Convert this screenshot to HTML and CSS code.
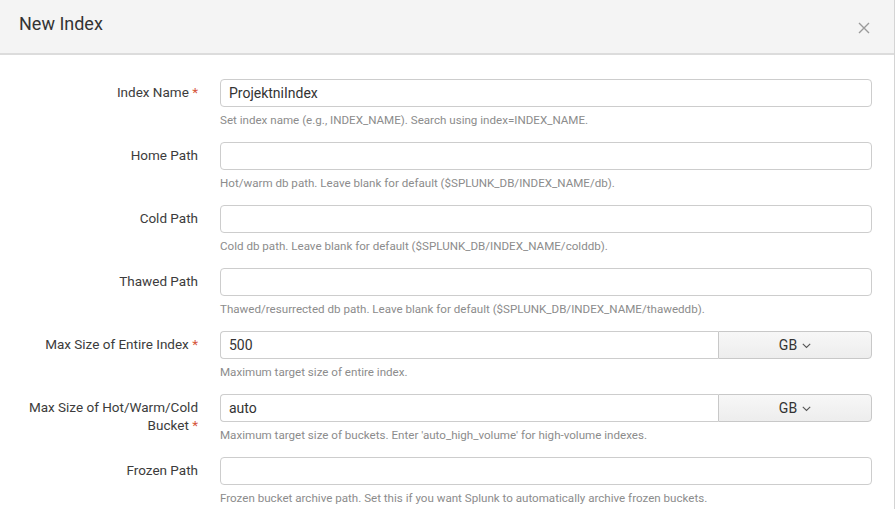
FILE: index.html
```html
<!DOCTYPE html>
<html>
<head>
<meta charset="utf-8">
<link rel="stylesheet" href="styles.css">
</head>
<body>
<div class="modal">
  <div class="modal-header">
    <h1 class="title">New Index</h1>
    <button class="close" aria-label="Close">
      <svg width="12" height="12" viewBox="0 0 12 12"><path d="M1 1L11 11M11 1L1 11" stroke="#9a9a9a" stroke-width="1.4" fill="none"/></svg>
    </button>
  </div>
  <div class="modal-body">
    <div class="row">
      <label class="label">Index Name <span class="req">*</span></label>
      <div class="control">
        <input class="input" type="text" value="ProjektniIndex">
        <div class="help">Set index name (e.g., INDEX_NAME). Search using index=INDEX_NAME.</div>
      </div>
    </div>
    <div class="row">
      <label class="label">Home Path</label>
      <div class="control">
        <input class="input" type="text" value="">
        <div class="help">Hot/warm db path. Leave blank for default ($SPLUNK_DB/INDEX_NAME/db).</div>
      </div>
    </div>
    <div class="row">
      <label class="label">Cold Path</label>
      <div class="control">
        <input class="input" type="text" value="">
        <div class="help">Cold db path. Leave blank for default ($SPLUNK_DB/INDEX_NAME/colddb).</div>
      </div>
    </div>
    <div class="row">
      <label class="label">Thawed Path</label>
      <div class="control">
        <input class="input" type="text" value="">
        <div class="help">Thawed/resurrected db path. Leave blank for default ($SPLUNK_DB/INDEX_NAME/thaweddb).</div>
      </div>
    </div>
    <div class="row">
      <label class="label">Max Size of Entire Index <span class="req">*</span></label>
      <div class="control">
        <div class="group">
          <input class="input joined" type="text" value="500">
          <button class="unit">GB <svg class="chev" width="9" height="6" viewBox="0 0 9 6"><path d="M0.8 0.8L4.5 4.5L8.2 0.8" stroke="#555" stroke-width="1.1" fill="none"/></svg></button>
        </div>
        <div class="help">Maximum target size of entire index.</div>
      </div>
    </div>
    <div class="row">
      <label class="label">Max Size of Hot/Warm/Cold Bucket <span class="req">*</span></label>
      <div class="control">
        <div class="group">
          <input class="input joined" type="text" value="auto">
          <button class="unit">GB <svg class="chev" width="9" height="6" viewBox="0 0 9 6"><path d="M0.8 0.8L4.5 4.5L8.2 0.8" stroke="#555" stroke-width="1.1" fill="none"/></svg></button>
        </div>
        <div class="help">Maximum target size of buckets. Enter 'auto_high_volume' for high-volume indexes.</div>
      </div>
    </div>
    <div class="row">
      <label class="label">Frozen Path</label>
      <div class="control">
        <input class="input" type="text" value="">
        <div class="help">Frozen bucket archive path. Set this if you want Splunk to automatically archive frozen buckets.</div>
      </div>
    </div>
  </div>
</div>
</body>
</html>
```

FILE: styles.css
```css
html, body {
  margin: 0;
  padding: 0;
  background: #ffffff;
  height: 100%;
  overflow: hidden;
}
body {
  font-family: Roboto, "Liberation Sans", sans-serif;
  color: #333333;
}
.modal {
  width: 894px;
  border-right: 1px solid #d4d4d4;
  min-height: 509px;
  background: #ffffff;
}
.modal-header {
  height: 53px;
  background: #f4f4f4;
  border-bottom: 2px solid #dcdcdc;
  display: flex;
  align-items: center;
  justify-content: space-between;
  padding: 0 18px 0 19px;
}
.title {
  margin: 0;
  font-size: 18px;
  font-weight: 400;
  color: #333333;
  position: relative;
  top: -3px;
}
.close {
  border: 0;
  background: transparent;
  padding: 0;
  width: 16px;
  height: 16px;
  display: flex;
  align-items: center;
  justify-content: center;
  position: relative;
  top: 1px;
  right: 4px;
}
.modal-body {
  padding-top: 24px;
}
.row {
  display: grid;
  grid-template-columns: 198px 652px;
  column-gap: 22px;
  margin-bottom: 15px;
}
.label {
  text-align: right;
  font-size: 13.5px;
  line-height: 18px;
  padding-left: 22px;
  padding-top: 4px;
  color: #3c3c3c;
}
.req {
  color: #d6563c;
}
.control {
  display: flex;
  flex-direction: column;
}
.input {
  box-sizing: border-box;
  height: 28px;
  width: 100%;
  border: 1px solid #cdcdcd;
  border-radius: 4px;
  padding: 0 8px;
  font-family: Roboto, "Liberation Sans", sans-serif;
  font-size: 14px;
  color: #333333;
  background: #ffffff;
  outline: none;
  margin: 0;
}
.group {
  display: flex;
  height: 28px;
}
.input.joined {
  width: 498px;
  border-top-right-radius: 0;
  border-bottom-right-radius: 0;
  border-right: 0;
}
.unit {
  box-sizing: border-box;
  width: 154px;
  height: 28px;
  border: 1px solid #c8c8c8;
  border-radius: 0 4px 4px 0;
  background: linear-gradient(#f7f7f7, #ededed);
  font-family: Roboto, "Liberation Sans", sans-serif;
  font-size: 14px;
  color: #333333;
  display: flex;
  align-items: center;
  justify-content: center;
  gap: 5px;
  padding: 0;
  margin: 0;
}
.chev {
  display: block;
  margin-top: 1px;
}
.help {
  margin-top: 6px;
  font-size: 11.6px;
  line-height: 14px;
  color: #8c8c8c;
}
```
